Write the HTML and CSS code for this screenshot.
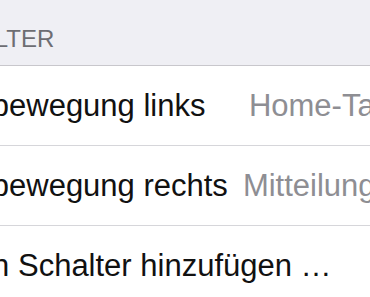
FILE: index.html
```html
<!DOCTYPE html>
<html lang="de">
<head>
<meta charset="utf-8">
<title>Schalter</title>
<link rel="stylesheet" href="styles.css">
</head>
<body>
<div class="table">
  <div class="section-header">SCHALTER</div>
  <div class="row">
    <span class="label">Kopfbewegung links</span>
    <span class="detail">Home-Taste</span>
  </div>
  <div class="row">
    <span class="label">Kopfbewegung rechts</span>
    <span class="detail">Mitteilungszentrale</span>
  </div>
  <div class="row row-add">
    <span class="label label-add">Neuen Schalter hinzufügen …</span>
  </div>
</div>
</body>
</html>
```
FILE: styles.css
```css
html, body {
  margin: 0;
  padding: 0;
}
body {
  width: 370px;
  height: 297px;
  overflow: hidden;
  background: #ffffff;
  font-family: "Liberation Sans", Arial, sans-serif;
}
.table {
  margin-left: -72px;
  width: 510px;
}
.section-header {
  box-sizing: border-box;
  height: 66px;
  padding-top: 27px;
  background: #efeff4;
  border-bottom: 1px solid #c8c7cc;
  color: #6d6d72;
  font-size: 24px;
  line-height: 24px;
}
.row {
  box-sizing: border-box;
  height: 80px;
  display: flex;
  align-items: center;
  padding-right: 22px;
  border-bottom: 1px solid #d6d6da;
  background: #fff;
  font-size: 31px;
  line-height: 36px;
  white-space: nowrap;
}
.label {
  flex: 0 0 auto;
  color: #111;
}
.label-add {
  margin-left: -10px;
}
.detail {
  flex: 0 1 auto;
  min-width: 0;
  margin-left: auto;
  padding-left: 15px;
  overflow: hidden;
  text-overflow: ellipsis;
  color: #8e8e93;
}
.row-add {
  border-bottom: none;
}
```
